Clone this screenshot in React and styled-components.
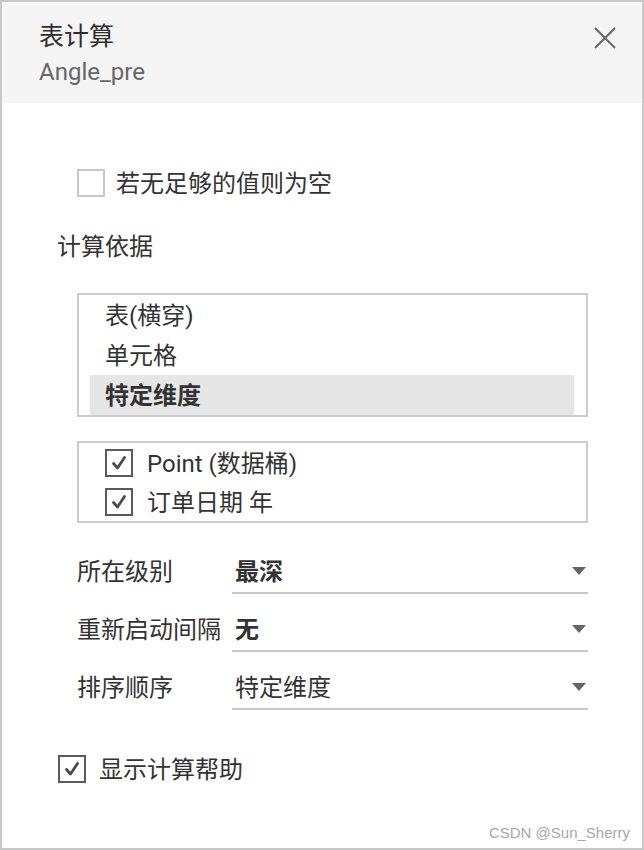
import React from "react";
import styled, { createGlobalStyle } from "styled-components";

const GlobalStyle = createGlobalStyle`
  html, body { margin: 0; padding: 0; background: #fff; }
  body { font-family: Roboto, "Noto Sans CJK SC", sans-serif; color: #333; }
  * { box-sizing: border-box; }
`;

const Dialog = styled.div`
  position: relative;
  width: 644px;
  height: 850px;
  border: 2px solid #c8c8c8;
  background: #fff;
  display: flex;
  flex-direction: column;
`;

const Header = styled.header`
  background: #f5f5f5;
  padding: 20px 26px 16px 37px;
  display: flex;
  justify-content: space-between;
  align-items: flex-start;
`;

const Titles = styled.div`
  display: flex;
  flex-direction: column;
  gap: 5px;
`;

const Title = styled.div`
  font-size: 25px;
  line-height: 30px;
  color: #2e2e2e;
`;

const Subtitle = styled.div`
  font-size: 24px;
  line-height: 30px;
  color: #666;
`;

const CloseButton = styled.button`
  border: 0;
  background: none;
  padding: 0;
  margin-top: 5px;
  width: 22px;
  height: 22px;
  display: flex;
  cursor: pointer;
`;

const Body = styled.div`
  padding: 66px 54px 0 55px;
  display: flex;
  flex-direction: column;
`;

const CheckRow = styled.label`
  display: flex;
  align-items: center;
  gap: ${(p) => p.$gap || 11}px;
  margin-left: ${(p) => p.$indent || 0}px;
  height: ${(p) => p.$h || 28}px;
  font-size: 24px;
  color: #333;
`;

const CheckText = styled.span`
  margin-top: -3px;
`;

const Box = styled.span`
  width: 28px;
  height: 28px;
  flex: none;
  border: 2px solid ${(p) => (p.$checked ? "#5a5a5a" : "#c8c8c8")};
  background: #fff;
  display: flex;
  align-items: center;
  justify-content: center;
`;

const SectionLabel = styled.div`
  margin-top: 35px;
  font-size: 24px;
  line-height: 30px;
  color: #333;
`;

const ListBox = styled.div`
  margin: ${(p) => p.$mt}px 0 0 20px;
  border: 2px solid #cccccc;
  padding: 0 ${(p) => p.$pr || 0}px 0 ${(p) => p.$pl || 0}px;
  display: flex;
  flex-direction: column;
`;

const ListItem = styled.div`
  height: 40px;
  display: flex;
  align-items: center;
  padding: 0 0 4px 15px;
  font-size: 24px;
  font-weight: ${(p) => (p.$selected ? 700 : 400)};
  background: ${(p) => (p.$selected ? "#e6e6e6" : "transparent")};
  color: #333;
`;

const FieldRows = styled.div`
  margin: 29px 0 0 20px;
  display: flex;
  flex-direction: column;
  gap: 16px;
`;

const FieldRow = styled.div`
  display: grid;
  grid-template-columns: 155px 1fr;
  align-items: center;
`;

const FieldLabel = styled.div`
  font-size: 24px;
  color: #333;
  white-space: nowrap;
  margin-bottom: 7px;
`;

const Select = styled.div`
  height: 42px;
  border-bottom: 2px solid #c8c8c8;
  display: flex;
  align-items: center;
  justify-content: space-between;
  padding: 0 2px 5px 3px;
  font-size: 24px;
  font-weight: ${(p) => (p.$bold ? 700 : 400)};
  color: #333;
`;

const Arrow = styled.span`
  width: 0;
  height: 0;
  border-left: 7px solid transparent;
  border-right: 7px solid transparent;
  border-top: 8px solid #666;
  margin-top: 2px;
`;

const Watermark = styled.div`
  position: absolute;
  right: 12px;
  bottom: 7px;
  font-family: "Liberation Sans", Arial, sans-serif;
  font-size: 15px;
  color: #a8a8a8;
`;

const Check = () => (
  <svg width="18" height="18" viewBox="0 0 18 18">
    <path d="M3.5 9.5 L7.5 14 L14.5 3.5" fill="none" stroke="#4a4a4a" strokeWidth="2.8" strokeLinecap="round" strokeLinejoin="round" />
  </svg>
);

const CheckBox = ({ checked }) => <Box $checked={checked}>{checked && <Check />}</Box>;

const CloseIcon = () => (
  <svg width="22" height="22" viewBox="0 0 22 22">
    <path d="M1 1 L21 21 M21 1 L1 21" stroke="#666" strokeWidth="2" fill="none" />
  </svg>
);

const fields = [
  { label: "所在级别", value: "最深", bold: true },
  { label: "重新启动间隔", value: "无", bold: true },
  { label: "排序顺序", value: "特定维度", bold: false },
];

export default function App() {
  return (
    <>
      <GlobalStyle />
      <Dialog>
        <Header>
          <Titles>
            <Title>表计算</Title>
            <Subtitle>Angle_pre</Subtitle>
          </Titles>
          <CloseButton aria-label="close">
            <CloseIcon />
          </CloseButton>
        </Header>
        <Body>
          <CheckRow $indent={20}>
            <CheckBox checked={false} />
            <CheckText>若无足够的值则为空</CheckText>
          </CheckRow>
          <SectionLabel>计算依据</SectionLabel>
          <ListBox $mt={31} $pl={11} $pr={12}>
            <ListItem>表(横穿)</ListItem>
            <ListItem>单元格</ListItem>
            <ListItem $selected>特定维度</ListItem>
          </ListBox>
          <ListBox $mt={24} $pl={26}>
            <CheckRow $h={39} $gap={14}>
              <CheckBox checked />
              <CheckText>Point (数据桶)</CheckText>
            </CheckRow>
            <CheckRow $h={39} $gap={14}>
              <CheckBox checked />
              <CheckText>订单日期 年</CheckText>
            </CheckRow>
          </ListBox>
          <FieldRows>
            {fields.map((f) => (
              <FieldRow key={f.label}>
                <FieldLabel>{f.label}</FieldLabel>
                <Select $bold={f.bold}>
                  <span>{f.value}</span>
                  <Arrow />
                </Select>
              </FieldRow>
            ))}
          </FieldRows>
          <CheckRow $indent={1} $gap={13} style={{ marginTop: 45 }}>
            <CheckBox checked />
            <CheckText>显示计算帮助</CheckText>
          </CheckRow>
        </Body>
        <Watermark>CSDN @Sun_Sherry</Watermark>
      </Dialog>
    </>
  );
}
